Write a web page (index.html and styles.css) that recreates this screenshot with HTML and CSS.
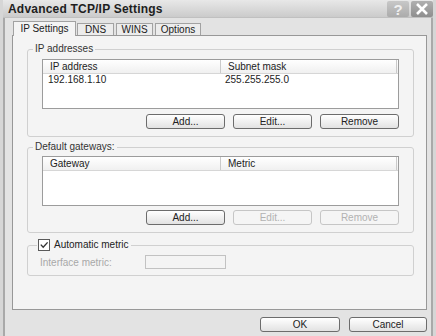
FILE: index.html
```html
<!DOCTYPE html>
<html lang="en">
<head>
    <meta charset="UTF-8">
    <meta name="viewport" content="width=device-width, initial-scale=1.0">
    <title>Advanced TCP/IP Settings</title>
    <link rel="stylesheet" href="styles.css">
</head>
<body>
    <div class="window">
        <!-- Title bar -->
        <div class="titlebar">
            <span class="title">Advanced TCP/IP Settings</span>
            <div class="caption-btns">
                <span class="cap help">?</span>
                <span class="cap close">
                    <svg width="14" height="12" viewBox="0 0 14 12"><path d="M2 1 L12 11 M12 1 L2 11" stroke="#fff" stroke-width="2.6" fill="none"/></svg>
                </span>
            </div>
        </div>

        <div class="frame">
            <!-- Tabs -->
            <div class="tabs">
                <span class="tab active tab-ip">IP Settings</span>
                <span class="tab tab-dns">DNS</span>
                <span class="tab tab-wins">WINS</span>
                <span class="tab tab-opt">Options</span>
            </div>

            <div class="panel">
                <!-- IP addresses -->
                <fieldset class="group group-ip">
                    <legend>IP addresses</legend>
                    <div class="list">
                        <div class="list-head">
                            <span class="col c1">IP address</span>
                            <span class="col c2">Subnet mask</span>
                        </div>
                        <div class="list-row">
                            <span class="c1">192.168.1.10</span>
                            <span class="c2">255.255.255.0</span>
                        </div>
                    </div>
                    <div class="btn-row">
                        <button class="btn">Add...</button>
                        <button class="btn">Edit...</button>
                        <button class="btn">Remove</button>
                    </div>
                </fieldset>

                <!-- Default gateways -->
                <fieldset class="group group-gw">
                    <legend>Default gateways:</legend>
                    <div class="list">
                        <div class="list-head">
                            <span class="col c1">Gateway</span>
                            <span class="col c2">Metric</span>
                        </div>
                    </div>
                    <div class="btn-row">
                        <button class="btn">Add...</button>
                        <button class="btn" disabled>Edit...</button>
                        <button class="btn" disabled>Remove</button>
                    </div>
                </fieldset>

                <!-- Automatic metric -->
                <fieldset class="group group-metric">
                    <legend class="check-legend">
                        <span class="checkbox">
                            <svg width="10" height="10" viewBox="0 0 10 10"><path d="M1.8 4.6 L4.2 7.2 L8.6 2.4" stroke="#333" stroke-width="1.4" fill="none"/></svg>
                        </span>
                        Automatic metric
                    </legend>
                    <div class="metric-row">
                        <span class="metric-label">Interface metric:</span>
                        <span class="metric-input"></span>
                    </div>
                </fieldset>
            </div>

            <div class="footer">
                <button class="btn btn-ok">OK</button>
                <button class="btn btn-cancel">Cancel</button>
            </div>
        </div>
    </div>
</body>
</html>
```

FILE: styles.css
```css
/* General */
body {
    margin: 0;
    font-family: "Liberation Sans", Arial, sans-serif;
    font-size: 10px;
    color: #222;
    background: #e3e3e3;
}

.window {
    width: 436px;
    height: 336px;
    box-sizing: border-box;
    border-left: 3px solid #d6d6d6;
    border-right: 3px solid #d6d6d6;
    background: #e3e3e3;
    display: flex;
    flex-direction: column;
}

/* Title bar */
.titlebar {
    height: 18px;
    display: flex;
    align-items: center;
    justify-content: space-between;
    padding-left: 5px;
    background: linear-gradient(#e8e8e8, #cbcbcb);
    border-bottom: 1px solid #c0c0c0;
    box-sizing: border-box;
}

.title {
    font-weight: bold;
    font-size: 12px;
    letter-spacing: 0.2px;
    color: #1e1e1e;
}

.caption-btns {
    display: flex;
    gap: 2px;
    align-self: flex-start;
    padding-top: 1px;
}

.cap {
    width: 22px;
    height: 16px;
    display: flex;
    align-items: center;
    justify-content: center;
    border-radius: 2px;
}

.help {
    background: linear-gradient(#c8c8c8, #ababab);
    color: #f0f0f0;
    font-weight: bold;
    font-size: 15px;
}

.close {
    background: linear-gradient(#b0b0b0, #8e8e8e);
}

/* Body frame */
.frame {
    flex: 1;
    display: flex;
    flex-direction: column;
    border-left: 2px solid #a9a9a9;
    border-right: 2px solid #a9a9a9;
    padding: 3px 4px 0 7px;
}

/* Tabs */
.tabs {
    display: flex;
    align-items: flex-end;
    height: 14px;
    padding-left: 1px;
}

.tab {
    height: 12px;
    line-height: 12px;
    box-sizing: border-box;
    border: 1px solid #a2a2a2;
    border-bottom: none;
    background: #ececec;
    text-align: center;
    margin-right: 2px;
}

.tab.active {
    height: 15px;
    line-height: 13px;
    background: #f4f4f4;
    margin-bottom: -1px;
    position: relative;
    z-index: 1;
    margin-right: 1px;
}

.tab-ip { width: 63px; }
.tab-dns { width: 37px; }
.tab-wins { width: 37px; }
.tab-opt { width: 46px; }

.panel {
    height: 275px;
    box-sizing: border-box;
    border: 1px solid #989898;
    background: #f4f4f4;
    padding: 0 12px 0 14px;
}

/* Group boxes */
.group {
    margin: 0;
    border: 1px solid #d0d0d0;
    border-radius: 3px;
    padding: 4px 14px 7px 14px;
}

.group legend {
    margin-left: -9px;
    padding: 0 2px;
    line-height: 12px;
    height: 12px;
    color: #333;
}

.group-ip { margin-top: 7px; }
.group-gw { margin-top: 4px; padding-top: 3px; padding-bottom: 7px; }
.group-metric { margin-top: 6px; padding-bottom: 6px; }

/* List views */
.list {
    height: 50px;
    box-sizing: border-box;
    border: 1px solid #9c9c9c;
    background: #fff;
}

.list-head {
    display: flex;
    height: 14px;
    box-sizing: border-box;
    border-bottom: 1px solid #d6d6d6;
    background: linear-gradient(#ffffff, #f0f0f0);
}

.list-head .col {
    box-sizing: border-box;
    border-right: 1px solid #cacaca;
    padding-left: 7px;
    line-height: 13px;
}

.list-head .c1 { width: 178px; }
.list-head .c2 { width: 176px; }

.list-row {
    display: flex;
    height: 12px;
    line-height: 12px;
}

.list-row .c1 { width: 178px; padding-left: 5px; box-sizing: border-box; }
.list-row .c2 { padding-left: 4px; }

/* Buttons */
.btn-row {
    display: flex;
    justify-content: flex-end;
    gap: 8px;
    margin-top: 5px;
}

.group-gw .btn-row { margin-top: 4px; }

.btn {
    width: 79px;
    height: 15px;
    padding: 0;
    border: 1px solid #6c6c6c;
    border-radius: 3px;
    background: linear-gradient(#ffffff, #e2e2e2);
    font-family: "Liberation Sans", Arial, sans-serif;
    font-size: 10px;
    color: #222;
}

.btn:disabled {
    border-color: #c6c6c6;
    background: #f5f5f5;
    color: #b2b2b2;
}

/* Automatic metric */
.check-legend {
    display: flex;
    align-items: center;
    gap: 4px;
}

.group .check-legend {
    margin-left: -5px;
    padding: 0 3px 0 1px;
    color: #222;
}

.checkbox {
    width: 12px;
    height: 12px;
    box-sizing: border-box;
    border: 1px solid #5a5a5a;
    background: #fff;
    display: flex;
    align-items: center;
    justify-content: center;
}

.metric-row {
    display: flex;
    align-items: center;
    margin-left: -2px;
    height: 14px;
}

.metric-label {
    width: 105px;
    color: #a8a8a8;
}

.metric-input {
    width: 81px;
    height: 14px;
    box-sizing: border-box;
    border: 1px solid #c2c2c2;
    background: #f4f4f4;
}

/* Footer */
.footer {
    display: flex;
    justify-content: flex-end;
    gap: 9px;
    margin-top: 7px;
}

.btn-ok { width: 80px; }
.btn-cancel { width: 78px; }
```
